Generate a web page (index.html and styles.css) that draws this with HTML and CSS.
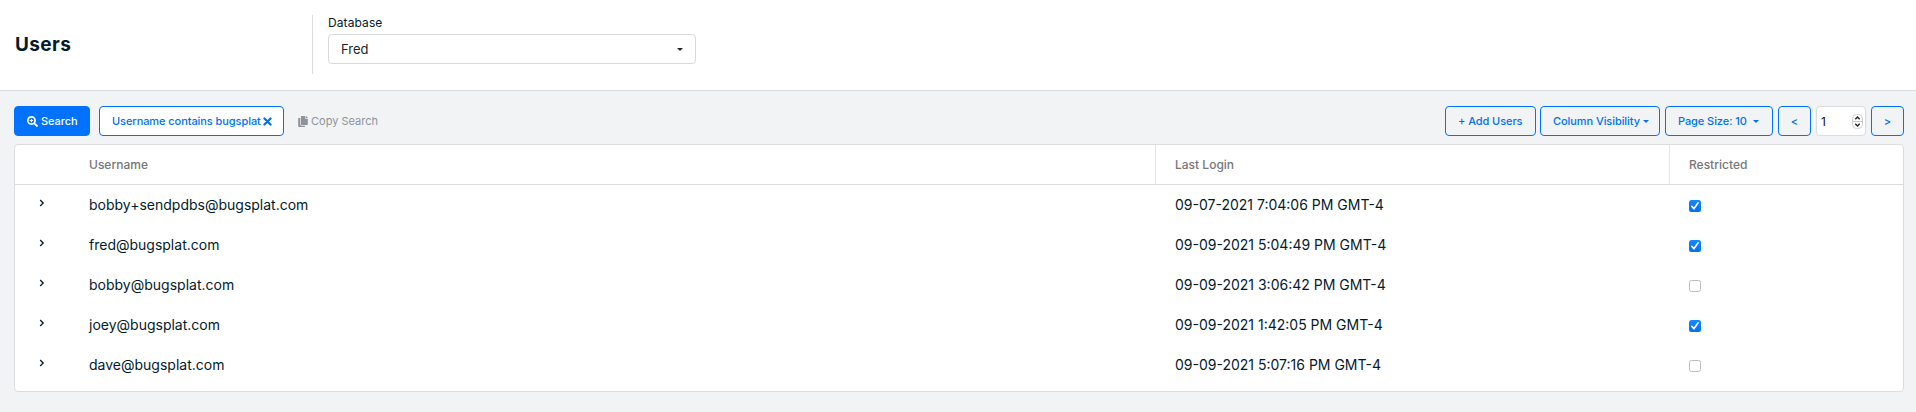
FILE: index.html
```
<!DOCTYPE html>
<html lang="en">
<head>
<meta charset="utf-8">
<title>Users</title>
<link rel="stylesheet" href="styles.css">
</head>
<body>
<header class="page-header">
  <h1 class="page-title">Users</h1>
  <div class="database">
    <span class="database-label">Database</span>
    <div class="select"><span>Fred</span><i class="caret"></i></div>
  </div>
</header>
<main class="content">
  <div class="toolbar">
    <button class="btn btn-primary btn-search"><svg class="icon-search" viewBox="0 0 512 512"><path fill="currentColor" fill-rule="evenodd" d="M505 443 405 343c-4.500-4.500-10.600-7-17-7h-16.300A207 207 0 0 0 416 208C416 93.100 322.900 0 208 0S0 93.100 0 208s93.100 208 208 208c48.300 0 92.700-16.400 128-44v16.300c0 6.400 2.500 12.500 7 17l99.700 99.700c9.400 9.400 24.600 9.400 33.900 0l28.300-28.300c9.400-9.400 9.400-24.600.1-34zM208 336a128 128 0 1 1 0-256 128 128 0 0 1 0 256zM184 128h48v56h56v48h-56v56h-48v-56h-56v-48h56z"/></svg><span>Search</span></button>
    <button class="btn btn-filter"><span>Username contains bugsplat</span><svg class="icon-times" viewBox="0 0 10 10"><path d="M1.600 1.600 8.400 8.400M8.400 1.600 1.600 8.400" fill="none" stroke="currentColor" stroke-width="2.500" stroke-linecap="round"/></svg></button>
    <span class="copy"><svg class="icon-copy" viewBox="0 0 448 512"><path fill="currentColor" d="M320 448v40c0 13.300-10.700 24-24 24H24c-13.300 0-24-10.700-24-24V120c0-13.300 10.700-24 24-24h72v296c0 30.900 25.100 56 56 56zm0-344V0H152c-13.300 0-24 10.700-24 24v368c0 13.300 10.700 24 24 24h272c13.300 0 24-10.700 24-24V128H344c-13.200 0-24-10.800-24-24zm121-31L375 7a24 24 0 0 0-17-7h-6v96h96v-6.100a24 24 0 0 0-7-16.900z"/></svg><span>Copy Search</span></span>
    <div class="actions">
      <button class="btn btn-add">+ Add Users</button>
      <button class="btn btn-columns"><span>Column Visibility</span><i class="caret"></i></button>
      <button class="btn btn-size"><span>Page Size: 10</span><i class="caret"></i></button>
      <button class="btn btn-step">&lt;</button>
      <div class="page-number"><span>1</span><svg class="spinner" viewBox="0 0 11 15"><rect x=".5" y=".5" width="10" height="14" rx="4" fill="#fff" stroke="#d2d2d2"/><path d="M0 7.500h11" stroke="#c8c8c8"/><path d="m3.300 5.300 2.200-2.200 2.200 2.200M3.300 9.700l2.200 2.200 2.200-2.200" fill="none" stroke="#222" stroke-width="1.400"/></svg></div>
      <button class="btn btn-step">&gt;</button>
    </div>
  </div>
  <section class="table">
    <div class="row head"><span></span><span>Username</span><span class="divided">Last Login</span><span class="divided">Restricted</span></div>
    <div class="row"><svg class="chevron" viewBox="0 0 6 8"><path d="m1.200 1 3 3-3 3"/></svg><span>bobby+sendpdbs@bugsplat.com</span><span class="date">09-07-2021 7:04:06 PM GMT-4</span><span class="flag"><i class="check on"><svg viewBox="0 0 12 12"><path d="m2.700 6.300 2.200 2.500 4.200-6"/></svg></i></span></div>
    <div class="row"><svg class="chevron" viewBox="0 0 6 8"><path d="m1.200 1 3 3-3 3"/></svg><span>fred@bugsplat.com</span><span class="date">09-09-2021 5:04:49 PM GMT-4</span><span class="flag"><i class="check on"><svg viewBox="0 0 12 12"><path d="m2.700 6.300 2.200 2.500 4.200-6"/></svg></i></span></div>
    <div class="row"><svg class="chevron" viewBox="0 0 6 8"><path d="m1.200 1 3 3-3 3"/></svg><span>bobby@bugsplat.com</span><span class="date">09-09-2021 3:06:42 PM GMT-4</span><span class="flag"><i class="check"></i></span></div>
    <div class="row"><svg class="chevron" viewBox="0 0 6 8"><path d="m1.200 1 3 3-3 3"/></svg><span>joey@bugsplat.com</span><span class="date">09-09-2021 1:42:05 PM GMT-4</span><span class="flag"><i class="check on"><svg viewBox="0 0 12 12"><path d="m2.700 6.300 2.200 2.500 4.200-6"/></svg></i></span></div>
    <div class="row"><svg class="chevron" viewBox="0 0 6 8"><path d="m1.200 1 3 3-3 3"/></svg><span>dave@bugsplat.com</span><span class="date">09-09-2021 5:07:16 PM GMT-4</span><span class="flag"><i class="check"></i></span></div>
  </section>
</main>
</body>
</html>
```
FILE: styles.css
```
* { box-sizing: border-box; }
body {
  margin: 0;
  min-height: 412px;
  background: #f1f3f5;
  color: #051b2c;
  font-family: Inter, "Liberation Sans", sans-serif;
  font-size: 14px;
}
.page-header {
  display: flex;
  height: 91px;
  padding: 15px 15px 16px;
  background: #fff;
  border-bottom: 1px solid #d9dde0;
}
.page-title {
  width: 297px;
  margin: 0;
  line-height: 59px;
  font-size: 19px;
  font-weight: 700;
  letter-spacing: .4px;
}
.database {
  width: 384px;
  height: 59px;
  padding-left: 15px;
  border-left: 1px solid #d9dde0;
}
.database-label {
  display: block;
  height: 19px;
  line-height: 16px;
  font-size: 12px;
  letter-spacing: .1px;
}
.select {
  display: flex;
  align-items: center;
  justify-content: space-between;
  height: 30px;
  padding: 0 12px;
  border: 1px solid #d6dadd;
  border-radius: 4px;
  color: #212529;
  font-size: 13px;
}
.caret {
  border: 3px solid transparent;
  border-top-color: currentColor;
  border-bottom: 0;
}
.content { padding: 15px 12px 0 14px; }
.toolbar { display: flex; align-items: center; height: 30px; }
.btn {
  display: flex;
  align-items: center;
  height: 30px;
  padding: 0 12px;
  border: 1px solid #0072ff;
  border-radius: 4px;
  background: transparent;
  color: #0072f0;
  font: 500 11px Inter, sans-serif;
  letter-spacing: -.07px;
  white-space: nowrap;
}
.btn-primary { background: #0072ff; color: #fff; }
.btn-search { width: 76px; }
.icon-search { width: 11px; height: 11px; margin-right: 3px; flex: none; }
.btn-filter { width: 185px; margin-left: 9px; background: #fff; }
.icon-times { width: 9px; height: 9px; margin-left: 2px; flex: none; }
.copy {
  display: flex;
  align-items: center;
  margin-left: 14px;
  color: #8d939b;
  font-size: 11px;
}
.icon-copy { width: 10px; height: 11px; margin-right: 3px; }
.actions { display: flex; margin-left: auto; }
.btn-add { width: 91px; }
.btn-columns { width: 120px; margin-left: 4px; }
.btn-columns .caret { margin-left: 3px; }
.btn-size { width: 108px; margin-left: 5px; }
.btn-size .caret { margin-left: 6px; }
.btn-step { width: 33px; margin-left: 5px; justify-content: center; }
.page-number {
  display: flex;
  align-items: center;
  justify-content: space-between;
  width: 50px;
  margin-left: 5px;
  padding: 0 2px 0 4px;
  border: 1px solid #d9dde0;
  border-radius: 4px;
  background: #fff;
  color: #111;
  font-size: 12px;
}
.spinner { width: 11px; height: 15px; }
.table {
  height: 248px;
  margin-top: 8px;
  border: 1px solid #d9dde0;
  border-radius: 4px;
  background: #fff;
}
.row {
  display: grid;
  grid-template-columns: 74px 1066px 514px 1fr;
  align-items: center;
  height: 40px;
  line-height: 20px;
}
.head {
  border-bottom: 1px solid #d9dde0;
  color: #777;
  font-size: 12px;
  font-weight: 500;
}
.divided {
  height: 39px;
  padding-left: 19px;
  border-left: 1px solid #e3e6e8;
  line-height: 39px;
}
.date, .flag { padding-left: 20px; }
.flag { padding-top: 1px; }
.chevron {
  width: 6px;
  height: 8px;
  margin: -5px 0 0 24px;
  fill: none;
  stroke: #051b2c;
  stroke-width: 1.300;
}
.check {
  display: block;
  width: 12px;
  height: 12px;
  border: 1px solid #bdbdbd;
  border-radius: 2.500px;
  background: #fff;
}
.check.on { border: 0; background: linear-gradient(#1688ff, #006fff); }
.check svg {
  display: block;
  width: 12px;
  height: 12px;
  fill: none;
  stroke: #fff;
  stroke-width: 1.600;
  stroke-linecap: round;
  stroke-linejoin: round;
}
```
